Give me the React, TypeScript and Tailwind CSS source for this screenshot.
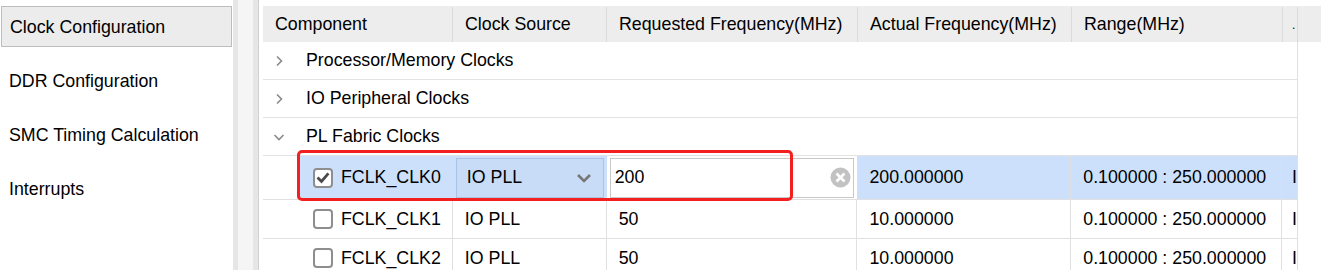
import React from 'react';

const FONT = "font-['Liberation_Sans',Arial,sans-serif]";

const SIDEBAR = ['Clock Configuration', 'DDR Configuration', 'SMC Timing Calculation', 'Interrupts'];

const GROUPS = [
  { label: 'Processor/Memory Clocks', open: false },
  { label: 'IO Peripheral Clocks', open: false },
  { label: 'PL Fabric Clocks', open: true },
];

const CLOCKS = [
  { name: 'FCLK_CLK1', src: 'IO PLL', req: '50', act: '10.000000', range: '0.100000 : 250.000000' },
  { name: 'FCLK_CLK2', src: 'IO PLL', req: '50', act: '10.000000', range: '0.100000 : 250.000000' },
];

function Chevron({ open }: { open: boolean }) {
  return (
    <svg width="12" height="12" viewBox="0 0 12 12" fill="none" stroke="#8a8a8a" strokeWidth={1.6}>
      {open ? <path d="M1.5 4 L6 8.5 L10.5 4" /> : <path d="M4 1.5 L8.5 6 L4 10.5" />}
    </svg>
  );
}

function Checkbox({ checked }: { checked?: boolean }) {
  return (
    <span className="w-[20px] h-[20px] rounded-[4px] border-2 border-[#8e8e8e] bg-white flex items-center justify-center shrink-0">
      {checked && (
        <svg width="14" height="14" viewBox="0 0 14 14" fill="none" stroke="#4a4a4a" strokeWidth={2.8} strokeLinecap="square">
          <path d="M2.5 7.5 L5.5 10.5 L11.5 3.5" />
        </svg>
      )}
    </span>
  );
}

export default function App() {
  return (
    <div className={`${FONT} flex h-[270px] w-[1321px] overflow-hidden bg-white text-[17.8px] text-black`}>
      {/* left nav */}
      <div className="w-[233px] shrink-0 pt-[6px] flex flex-col gap-[13px]">
        {SIDEBAR.map((s, i) => (
          <div
            key={s}
            className={`h-[41px] flex items-center pt-[2px] ${
              i === 0 ? 'ml-[1px] w-[231px] pl-[8px] bg-[#ececec] border border-[#bdbdbd]' : 'pl-[9px]'
            }`}
          >
            {s}
          </div>
        ))}
      </div>

      {/* splitter */}
      <div className="flex shrink-0 h-full">
        <div className="w-[5px] bg-[#e6e6e6]" />
        <div className="w-[15px] bg-[#f5f5f5]" />
        <div className="w-[5px] bg-[#e6e6e6]" />
        <div className="w-[1px] bg-[#d0d0d0]" />
        <div className="w-[4px] bg-white" />
      </div>

      {/* table */}
      <div className="flex-1 flex flex-col pt-[6px] min-w-0">
        <div className="flex h-[36px] bg-[#ededed] shrink-0 pt-[1px]">
          <div className="w-[190px] border-r border-[#dadada] flex items-center pl-[12px]">Component</div>
          <div className="w-[154px] border-r border-[#dadada] flex items-center pl-[12px]">Clock Source</div>
          <div className="w-[251px] border-r border-[#dadada] flex items-center pl-[12px] whitespace-nowrap">
            Requested Frequency(MHz)
          </div>
          <div className="w-[214px] border-r border-[#dadada] flex items-center pl-[12px] whitespace-nowrap">
            Actual Frequency(MHz)
          </div>
          <div className="w-[211px] border-r border-[#dadada] flex items-center pl-[12px]">Range(MHz)</div>
          <div className="w-[15px] border-r border-[#dadada] flex items-center pl-[9px] text-[12px]">.</div>
          <div className="flex-1" />
        </div>

        <div className="relative w-[1035px] border-r border-[#e0e0e0] flex-1">
          {GROUPS.map((g) => (
            <div key={g.label} className="h-[38px] border-b border-[#e3e3e3] flex items-center">
              <span className="w-[43px] pl-[10px] flex items-center">
                <Chevron open={g.open} />
              </span>
              <span>{g.label}</span>
            </div>
          ))}

          {/* selected row, in edit */}
          <div className="h-[44px] border-b border-[#e0e0e0] flex">
            <div className="w-[190px] flex">
              <div className="w-[34px] bg-white" />
              <div className="flex-1 bg-[#cce0fb] flex items-center pl-[16px] gap-[8px]">
                <Checkbox checked />
                <span>FCLK_CLK0</span>
              </div>
            </div>
            <div className="w-[154px] bg-[#cce0fb] flex items-center px-[3px]">
              <div className="w-full h-[40px] bg-[#c8dcf7] border border-[#abc3e3] flex items-center justify-between pl-[10px] pr-[11px]">
                <span>IO PLL</span>
                <svg width="16" height="10" viewBox="0 0 16 10" fill="none" stroke="#777" strokeWidth={2.6}>
                  <path d="M2 2 L8 8 L14 2" />
                </svg>
              </div>
            </div>
            <div className="w-[251px] bg-white flex items-center px-[3px]">
              <div className="w-full h-[40px] border border-[#c8c8c8] flex items-center justify-between pl-[4px] pr-[2px]">
                <span>200</span>
                <svg width="21" height="21" viewBox="0 0 21 21">
                  <circle cx="10.5" cy="10.5" r="10" fill="#c2c2c2" />
                  <path d="M6.5 6.5 L14.5 14.5 M14.5 6.5 L6.5 14.5" stroke="#fff" strokeWidth={2.6} />
                </svg>
              </div>
            </div>
            <div className="w-[214px] bg-[#cce0fb] border-r border-[#e0e0e0] flex items-center pl-[12px]">200.000000</div>
            <div className="w-[211px] bg-[#cce0fb] border-r border-[#e0e0e0] flex items-center pl-[12px]">
              0.100000 : 250.000000
            </div>
            <div className="flex-1 bg-[#cce0fb] flex items-center pl-[10px]">I</div>
          </div>

          {CLOCKS.map((c) => (
            <div key={c.name} className="h-[39px] border-b border-[#e0e0e0] flex">
              <div className="w-[190px] border-r border-[#e0e0e0] flex items-center pl-[50px] gap-[8px]">
                <Checkbox />
                <span>{c.name}</span>
              </div>
              <div className="w-[154px] border-r border-[#e0e0e0] flex items-center pl-[12px]">{c.src}</div>
              <div className="w-[251px] border-r border-[#e0e0e0] flex items-center pl-[12px]">{c.req}</div>
              <div className="w-[214px] border-r border-[#e0e0e0] flex items-center pl-[12px]">{c.act}</div>
              <div className="w-[211px] border-r border-[#e0e0e0] flex items-center pl-[12px]">{c.range}</div>
              <div className="flex-1 flex items-center pl-[10px]">I</div>
            </div>
          ))}

          {/* annotation box */}
          <div className="absolute left-[34px] top-[108px] w-[496px] h-[51px] border-[3.5px] border-[#f42020] rounded-[5px] pointer-events-none" />
        </div>
      </div>
    </div>
  );
}
